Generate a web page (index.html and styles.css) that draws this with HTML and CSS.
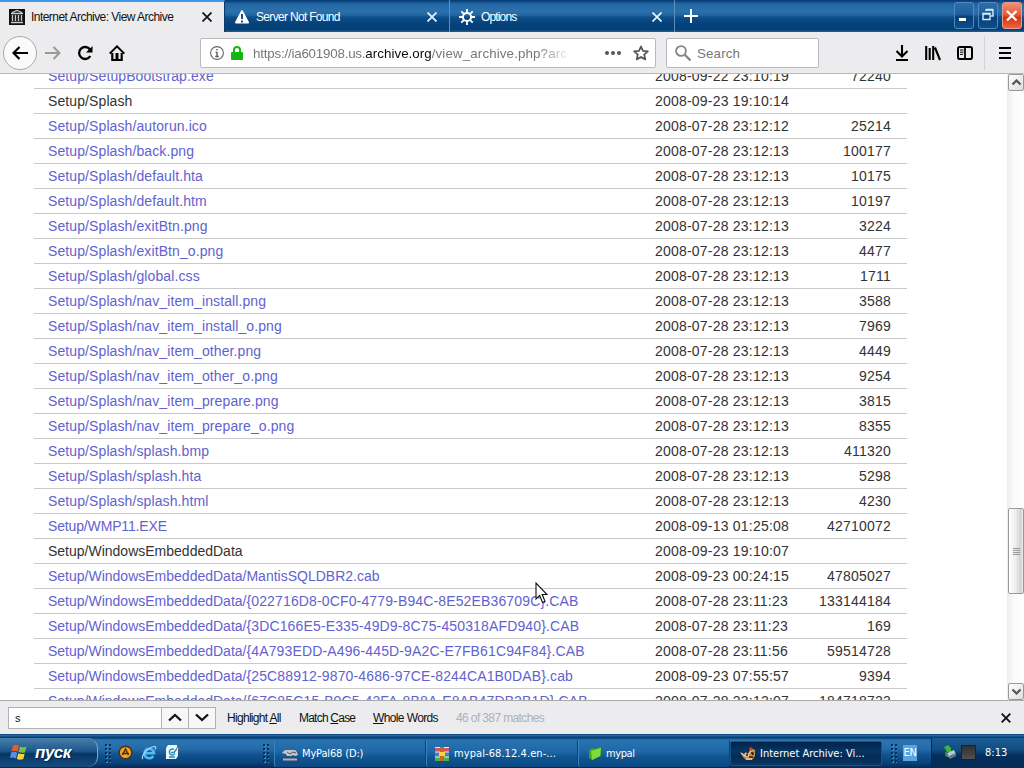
FILE: index.html
```html
<!DOCTYPE html>
<html lang="en">
<head>
    <meta charset="UTF-8">
    <title>Internet Archive: View Archive</title>
    <link rel="stylesheet" href="styles.css">
</head>
<body>
    <div class="screen">
        <div class="titlebar">
            <div class="tab active">
                <svg class="tab-icon" width="16" height="16" viewBox="0 0 16 16"><rect width="16" height="16" fill="#111"/><path d="M3 3.500L8 1.500L13 3.500M2 4.500h12M2 13.500h12M3.500 6v6M6.500 6v6M9.500 6v6M12.500 6v6" stroke="#ccc" stroke-width="1.300" fill="none"/></svg>
                <span class="tab-title">Internet Archive: View Archive</span>
                <svg class="tab-close" width="10" height="10" viewBox="0 0 10 10"><path d="M.5.5l9 9M9.500.5l-9 9"/></svg>
            </div>
            <div class="tab">
                <svg class="tab-icon" width="16" height="16" viewBox="0 0 16 16"><path d="M8 2.200L14 13.500H2Z" fill="#fff" stroke="#fff" stroke-width="2" stroke-linejoin="round"/><path d="M8 5v5M8 11.500v2" stroke="#12518a" stroke-width="2"/></svg>
                <span class="tab-title server">Server Not Found</span>
                <svg class="tab-close" width="10" height="10" viewBox="0 0 10 10"><path d="M.5.5l9 9M9.500.5l-9 9"/></svg>
            </div>
            <div class="tab">
                <svg class="tab-icon" width="16" height="16" viewBox="0 0 16 16"><circle cx="8" cy="8" r="4.100" fill="none" stroke="#fff" stroke-width="2"/><path d="M8 0v4M8 12v4M0 8h4M12 8h4M2.300 2.300l2.800 2.800M10.900 10.900l2.800 2.800M2.300 13.700l2.800-2.800M10.900 5.100l2.800-2.800" stroke="#fff" stroke-width="1.800"/></svg>
                <span class="tab-title options">Options</span>
                <svg class="tab-close" width="10" height="10" viewBox="0 0 10 10"><path d="M.5.5l9 9M9.500.5l-9 9"/></svg>
            </div>
            <svg class="new-tab" width="14" height="14" viewBox="0 0 14 14"><path d="M7 0v14M0 7h14" stroke="#fff" stroke-width="2"/></svg>
            <div class="window-buttons">
                <div class="win-btn"><svg width="18" height="22" viewBox="0 0 18 22"><path d="M4 14.500h7" stroke="#fff" stroke-width="3"/></svg></div>
                <div class="win-btn"><svg width="18" height="22" viewBox="0 0 18 22"><path d="M7 6V5h7v6h-2M7 4.500h7" stroke="#d5edff" stroke-width="1.400" fill="none"/><path d="M4 8.500h7v6H4zM4 9h7" stroke="#d5edff" stroke-width="1.400" fill="none"/></svg></div>
                <div class="win-btn close"><svg width="18" height="22" viewBox="0 0 18 22"><path d="M4 6l9.500 9.500M13.500 6L4 15.500" stroke="#fff" stroke-width="2.300"/></svg></div>
            </div>
        </div>

        <div class="toolbar">
            <div class="nav">
                <div class="back"><svg width="16" height="14" viewBox="0 0 16 14"><path d="M16 7H1.500M7.500 1L1.500 7l6 6" stroke="#000" stroke-width="2.200" fill="none"/></svg></div>
                <svg class="forward" width="16" height="14" viewBox="0 0 16 14"><path d="M0 7h14.500M8.500 1l6 6-6 6" stroke="#999" stroke-width="2" fill="none"/></svg>
                <svg class="reload" width="16" height="16" viewBox="0 0 16 16"><path d="M13 4.500A6 6 0 1 0 13.300 11" stroke="#000" stroke-width="2.300" fill="none"/><path d="M15.500 1v6.500H9Z" fill="#000"/></svg>
                <svg class="home" width="16" height="16" viewBox="0 0 16 16"><path d="M.7 8.600L8 1.400l7.300 7.200" stroke="#000" stroke-width="2" fill="none"/><path d="M3.300 8v7h9.400V8" stroke="#000" stroke-width="2.200" fill="none"/><path d="M6.500 8h3v7h-3z" fill="#000"/></svg>
            </div>
            <div class="urlbar">
                <svg class="info" width="14" height="14" viewBox="0 0 14 14"><circle cx="7" cy="7" r="6.400" fill="none" stroke="#666" stroke-width="1.100"/><path d="M7 3v1.600M5.600 6.300H7v4M5.300 10.500h3.400" stroke="#555" stroke-width="1.300" fill="none"/></svg>
                <svg class="lock" width="12" height="14" viewBox="0 0 12 14"><path d="M3 7V4a3 3 0 0 1 6 0v3" stroke="#12bc00" stroke-width="2" fill="none"/><rect y="6" width="12" height="8" rx="1" fill="#12b512"/></svg>
                <div class="url"><span class="host">https://ia601908.us.</span><span class="domain">archive.org</span>/view_archive.php?arc</div>
                <svg class="dots" width="16" height="4" viewBox="0 0 16 4"><circle cx="2" cy="2" r="2"/><circle cx="8" cy="2" r="2"/><circle cx="14" cy="2" r="2"/></svg>
                <svg class="star" width="16" height="16" viewBox="0 0 16 16"><path d="M8 1.500l2 4.400 4.800.5-3.600 3.200 1.100 4.800L8 12l-4.300 2.400 1.100-4.800L1.200 6.400 6 5.900Z" fill="none" stroke="#555" stroke-width="1.800" stroke-linejoin="round"/></svg>
            </div>
            <div class="search">
                <svg width="16" height="16" viewBox="0 0 16 16"><circle cx="6" cy="6" r="4.900" fill="none" stroke="#888" stroke-width="1.900"/><path d="M9.500 9.500l6 6" stroke="#888" stroke-width="2.300"/></svg>
                <span>Search</span>
            </div>
            <div class="tools">
                <svg width="14" height="16" viewBox="0 0 14 16"><path d="M7 0v11M1.500 6L7 11.500 12.500 6M1 15h12" stroke="#000" stroke-width="2.100" fill="none"/></svg>
                <svg width="16" height="16" viewBox="0 0 16 16"><path d="M1.200 1v14M4.700 3v12M8.200 1v14M10 2.500L15 15" stroke="#000" stroke-width="2.100"/></svg>
                <svg width="16" height="16" viewBox="0 0 16 16"><rect x="1" y="2" width="14" height="12" rx="1.800" fill="none" stroke="#000" stroke-width="2"/><path d="M8 2v12" stroke="#000" stroke-width="1.800"/><path d="M3 5h3.500M3 7.200h3.500M3 9.400h3" stroke="#000"/></svg>
            </div>
            <div class="menu"><svg width="12" height="12" viewBox="0 0 12 12"><path d="M0 1h12M0 6h12M0 11h12" stroke="#000" stroke-width="2"/></svg></div>
        </div>

        <div class="page">
            <div class="content">
                <table class="archext">
                    <tr><td><a>Setup/SetupBootstrap.exe</a></td><td>2008-09-22 23:10:19</td><td>72240</td></tr>
                    <tr><td>Setup/Splash</td><td>2008-09-23 19:10:14</td><td></td></tr>
                    <tr><td><a>Setup/Splash/autorun.ico</a></td><td>2008-07-28 23:12:12</td><td>25214</td></tr>
                    <tr><td><a>Setup/Splash/back.png</a></td><td>2008-07-28 23:12:13</td><td>100177</td></tr>
                    <tr><td><a>Setup/Splash/default.hta</a></td><td>2008-07-28 23:12:13</td><td>10175</td></tr>
                    <tr><td><a>Setup/Splash/default.htm</a></td><td>2008-07-28 23:12:13</td><td>10197</td></tr>
                    <tr><td><a>Setup/Splash/exitBtn.png</a></td><td>2008-07-28 23:12:13</td><td>3224</td></tr>
                    <tr><td><a>Setup/Splash/exitBtn_o.png</a></td><td>2008-07-28 23:12:13</td><td>4477</td></tr>
                    <tr><td><a>Setup/Splash/global.css</a></td><td>2008-07-28 23:12:13</td><td>1711</td></tr>
                    <tr><td><a>Setup/Splash/nav_item_install.png</a></td><td>2008-07-28 23:12:13</td><td>3588</td></tr>
                    <tr><td><a>Setup/Splash/nav_item_install_o.png</a></td><td>2008-07-28 23:12:13</td><td>7969</td></tr>
                    <tr><td><a>Setup/Splash/nav_item_other.png</a></td><td>2008-07-28 23:12:13</td><td>4449</td></tr>
                    <tr><td><a>Setup/Splash/nav_item_other_o.png</a></td><td>2008-07-28 23:12:13</td><td>9254</td></tr>
                    <tr><td><a>Setup/Splash/nav_item_prepare.png</a></td><td>2008-07-28 23:12:13</td><td>3815</td></tr>
                    <tr><td><a>Setup/Splash/nav_item_prepare_o.png</a></td><td>2008-07-28 23:12:13</td><td>8355</td></tr>
                    <tr><td><a>Setup/Splash/splash.bmp</a></td><td>2008-07-28 23:12:13</td><td>411320</td></tr>
                    <tr><td><a>Setup/Splash/splash.hta</a></td><td>2008-07-28 23:12:13</td><td>5298</td></tr>
                    <tr><td><a>Setup/Splash/splash.html</a></td><td>2008-07-28 23:12:13</td><td>4230</td></tr>
                    <tr class="upper"><td><a>Setup/WMP11.EXE</a></td><td>2008-09-13 01:25:08</td><td>42710072</td></tr>
                    <tr class="embedded"><td>Setup/WindowsEmbeddedData</td><td>2008-09-23 19:10:07</td><td></td></tr>
                    <tr class="embedded"><td><a>Setup/WindowsEmbeddedData/MantisSQLDBR2.cab</a></td><td>2008-09-23 00:24:15</td><td>47805027</td></tr>
                    <tr class="embedded"><td><a>Setup/WindowsEmbeddedData/<span class="guid">{022716D8-0CF0-4779-B94C-8E52EB36709C}.CAB</span></a></td><td>2008-07-28 23:11:23</td><td>133144184</td></tr>
                    <tr class="embedded"><td><a>Setup/WindowsEmbeddedData/<span class="guid">{3DC166E5-E335-49D9-8C75-450318AFD940}.CAB</span></a></td><td>2008-07-28 23:11:23</td><td>169</td></tr>
                    <tr class="embedded"><td><a>Setup/WindowsEmbeddedData/<span class="guid">{4A793EDD-A496-445D-9A2C-E7FB61C94F84}.CAB</span></a></td><td>2008-07-28 23:11:56</td><td>59514728</td></tr>
                    <tr class="embedded"><td><a>Setup/WindowsEmbeddedData/<span class="guid">{25C88912-9870-4686-97CE-8244CA1B0DAB}.cab</span></a></td><td>2008-09-23 07:55:57</td><td>9394</td></tr>
                    <tr class="embedded"><td><a>Setup/WindowsEmbeddedData/<span class="guid">{67C85C15-B0C5-42FA-8B8A-E8AB47DB2B1D}.CAB</span></a></td><td>2008-07-28 23:12:07</td><td>184718723</td></tr>
                </table>
            </div>
            <div class="scrollbar">
                <div class="scroll-btn"><svg width="11" height="7" viewBox="0 0 11 7"><path d="M1.500 5.500l4-4 4 4" stroke="#555" stroke-width="2.200" fill="none"/></svg></div>
                <div class="thumb"><i></i><i></i><i></i><i></i></div>
                <div class="scroll-btn down"><svg width="11" height="7" viewBox="0 0 11 7"><path d="M1.500 1.500l4 4 4-4" stroke="#555" stroke-width="2.200" fill="none"/></svg></div>
            </div>
        </div>

        <div class="findbar">
            <div class="find-input">s</div>
            <div class="find-btn"><svg width="14" height="9" viewBox="0 0 14 9"><path d="M1 7.500L7 2l6 5.500" stroke="#111" stroke-width="2.300" fill="none"/></svg></div>
            <div class="find-btn"><svg width="14" height="9" viewBox="0 0 14 9"><path d="M1 1.500L7 7l6-5.500" stroke="#111" stroke-width="2.300" fill="none"/></svg></div>
            <span class="find-label highlight">Highlight <u>A</u>ll</span>
            <span class="find-label match">Match <u>C</u>ase</span>
            <span class="find-label whole"><u>W</u>hole Words</span>
            <span class="find-label count">46 of 387 matches</span>
            <svg class="find-close" width="10" height="10" viewBox="0 0 10 10"><path d="M.7.7l8.600 8.600M9.300.7L.7 9.300" stroke="#111" stroke-width="1.900"/></svg>
        </div>

        <div class="taskbar">
            <div class="start">
                <svg width="18" height="17" viewBox="0 0 18 17"><path d="M3 1.500Q6 0 9 1.800L7.500 7.500Q5 6 1.500 7.300Z" fill="#ed5a2b"/><path d="M10 2.500Q13 4 16.500 2.500L15 8.300Q12 9.500 8.500 8Z" fill="#78c03a"/><path d="M1.200 8.500Q4.500 7 7.300 8.700L6 14.500Q3 13 0 14Z" fill="#5690e8"/><path d="M8.300 9.200Q11.500 10.700 14.700 9.500L13.300 15Q10 16.500 6.800 15Z" fill="#f8d434"/></svg>
                <span>пуск</span>
            </div>
            <div class="grip"></div>
            <div class="quick">
                <svg width="15" height="15" viewBox="0 0 15 15"><circle cx="7.500" cy="7.500" r="6.300" fill="#f5a51d" stroke="#4b3020" stroke-width="1.500"/><path d="M4.500 10L7.500 4l3 6M4 8.500h7" stroke="#4b3020" stroke-width="1.600" fill="none"/></svg>
                <svg width="16" height="16" viewBox="0 0 16 16"><path d="M4 8.200h9A4.800 4.800 0 1 0 12.300 11" stroke="#55b9f5" stroke-width="2.500" fill="none"/><path d="M2 14C-1 12 6 3 13 1.500q3-.3 1 3" stroke="#a5dcff" stroke-width="1.200" fill="none"/></svg>
                <svg width="15" height="15" viewBox="0 0 15 15"><path d="M3 0h9v2h1v9l-2 3H1V3Z" fill="#e8f8ff"/><path d="M9 4.500a3 3 0 1 0 1 4M6 7.500h3l3-4M4 12h6" stroke="#2587b8" stroke-width="1.300" fill="none"/><path d="M12 2l2 2" stroke="#e55" stroke-width="1.500"/></svg>
            </div>
            <div class="grip second"></div>
            <div class="tasks">
                <div class="task drive">
                    <svg width="16" height="16" viewBox="0 0 16 16"><path d="M0 7q2-3 4-3h9q2 1 3 5l-3 1-2-1-2 1H5L4 8Z" fill="#c4c6c9"/><path d="M5 6l3 2 3-2 3 1" stroke="#555" fill="none"/><path d="M1 13.500h14" stroke="#d6a3a7" stroke-width="2"/></svg>
                    <span>MyPal68 (D:)</span>
                </div>
                <div class="task zip">
                    <svg width="16" height="16" viewBox="0 0 16 16"><rect x="1" y="1" width="14" height="4.500" fill="#d94e60"/><rect x="1" y="5.500" width="14" height="5" fill="#467cca"/><rect x="1" y="10.500" width="14" height="4.500" fill="#4cad4c"/><path d="M1 1.500h14M1 6h14M1 11h14" stroke="#eed" /><path d="M6 1h4v14H6z" fill="#bd6c20"/><path d="M5 6h6v4H5z" fill="#ffcf3e"/></svg>
                    <span>mypal-68.12.4.en-...</span>
                </div>
                <div class="task folder">
                    <svg width="14" height="15" viewBox="0 0 14 15"><path d="M1 4l4-2 1 1 7-2v9L4 14 1 12Z" fill="#3fa51a"/><path d="M3 5l10-3-1 8-8 4Z" fill="#7fdb3c"/></svg>
                    <span>mypal</span>
                </div>
                <div class="task pressed">
                    <svg width="16" height="14" viewBox="0 0 16 14"><path d="M0 5l4 2 2-2 2 2 3-6 4 2v6l-3 4H6L3 10Z" fill="#c98d43"/><path d="M1 6l4 3h4M5 6l2 3 4-5M6 12h6" stroke="#f5e5bf" fill="none"/><path d="M9 2l2-1 1 2" stroke="#d33" stroke-width="1.500" fill="none"/><path d="M6 8h2M11 6h2v2M9 10h4" stroke="#27180e" stroke-width="1.300"/></svg>
                    <span>Internet Archive: Vi...</span>
                </div>
            </div>
            <div class="grip third"></div>
            <div class="lang">EN</div>
            <div class="tray">
                <svg width="14" height="15" viewBox="0 0 14 15"><path d="M1 2l4-2 3 3v4H4Z" fill="#39b836"/><path d="M4 8l7-3 2 4-7 4Z" fill="#bac8d2"/><path d="M6 11l7-3v3l-6 3Z" fill="#627888"/><path d="M3 7v4h3" stroke="#62ce4c" fill="none"/></svg>
                <div class="tray-box"></div>
                <span class="clock">8:13</span>
            </div>
        </div>

        <svg class="cursor" width="13" height="22" viewBox="0 0 13 22"><path d="M1 1v16l3.700-3.500L7.500 20.500l2.500-1.200L7.200 12.500H12Z" fill="#fff" stroke="#111" stroke-width="1.100"/></svg>
    </div>
</body>
</html>
```
FILE: styles.css
```css
body {
    margin: 0;
    font-family: "Liberation Sans", Arial, sans-serif;
    overflow: hidden;
}

svg {
    display: block;
    flex: none;
}

.screen {
    position: relative;
    width: 1024px;
    height: 768px;
    display: flex;
    flex-direction: column;
    overflow: hidden;
    background: #fff;
}

/* title bar and tabs */
.titlebar {
    height: 32px;
    flex: none;
    display: flex;
    background: linear-gradient(#0a3a73 0, #08427f 1px, #2368a4 4px, #2c70ab 11px, #2468a3 15px, #0e4f8b 17px, #05417b 24px, #044178 30px, #335f87 32px);
}

.tab {
    box-sizing: border-box;
    width: 225px;
    height: 32px;
    padding: 2px 12px 0 9px;
    display: flex;
    align-items: center;
    border-right: 1px solid #5a8fbf;
    color: #fff;
    font-size: 12px;
}

.tab.active {
    background: #ececef;
    border-top: 2px solid #3d96e8;
    border-right: 1px solid #0a3a6b;
    padding-top: 0;
    color: #111;
}

.tab-title {
    margin-left: 6px;
    flex: 1;
    white-space: nowrap;
    letter-spacing: -0.54px;
}

.tab-title.server {
    letter-spacing: -0.68px;
}

.tab-title.options {
    letter-spacing: -0.85px;
}

.tab-close path {
    stroke: #e6f4ff;
    stroke-width: 1.7;
}

.active .tab-close path {
    stroke: #111;
}

.new-tab {
    margin: 9px 0 0 9px;
}

.window-buttons {
    display: flex;
    gap: 4px;
    margin: 2px 2px 0 auto;
}

.win-btn {
    box-sizing: border-box;
    width: 20px;
    height: 27px;
    padding-top: 2px;
    border: 1px solid #5189ba;
    border-radius: 3px;
    background: linear-gradient(#2d70aa, #1d5f9c 45%, #064079 55%, #0c4e88);
}

.win-btn.close {
    border-color: #e39c8e;
    background: linear-gradient(#ee9078, #e25d3e 45%, #cb3514 60%, #ef6739);
}

/* navigation toolbar */
.toolbar {
    box-sizing: border-box;
    height: 42px;
    flex: none;
    display: flex;
    align-items: center;
    background: #ececef;
    border-bottom: 1px solid #b6b6b9;
}

.nav {
    width: 200px;
    display: flex;
    align-items: center;
}

.back {
    box-sizing: border-box;
    width: 34px;
    height: 34px;
    margin-left: 3px;
    display: flex;
    align-items: center;
    justify-content: center;
    border: 1px solid #aaa;
    border-radius: 50%;
    background: #fafafa;
}

.forward {
    margin-left: 8px;
}

.reload {
    margin-left: 16px;
}

.home {
    margin-left: 16px;
}

.urlbar,
.search {
    box-sizing: border-box;
    height: 30px;
    display: flex;
    align-items: center;
    background: #fff;
    border: 1px solid #b9b9bd;
    border-radius: 2px;
}

.urlbar {
    width: 456px;
    padding-left: 9px;
}

.lock {
    margin-left: 7px;
}

.url {
    width: 318px;
    margin-left: 10px;
    padding-top: 1px;
    color: #777;
    font-size: 13.33px;
    letter-spacing: 0.13px;
    white-space: nowrap;
    overflow: hidden;
    -webkit-mask-image: linear-gradient(to right, #000 285px, transparent 318px);
    mask-image: linear-gradient(to right, #000 285px, transparent 318px);
}

.host {
    letter-spacing: -0.2px;
}

.domain {
    color: #0c0c0d;
    letter-spacing: 0.04px;
}

.dots {
    margin-left: 34px;
    fill: #555;
}

.star {
    margin-left: 12px;
}

.search {
    width: 153px;
    margin-left: 10px;
    padding-left: 8px;
    color: #777;
    font-size: 13.33px;
    letter-spacing: 0.15px;
}

.search span {
    margin-left: 6px;
    padding-top: 1px;
}

.tools {
    display: flex;
    align-items: center;
    gap: 16px;
    margin-left: 76px;
}

.menu {
    height: 34px;
    display: flex;
    align-items: center;
    margin-left: 11px;
    padding-left: 14px;
    border-left: 1px solid #d3d3d6;
}

/* file listing */
.page {
    height: 626px;
    flex: none;
    display: flex;
    overflow: hidden;
}

.content {
    flex: 1;
    overflow: hidden;
}

.archext {
    width: 873px;
    margin: -10px 0 0 34px;
    table-layout: fixed;
    border-collapse: separate;
    border-spacing: 0;
    font-size: 14px;
    letter-spacing: 0.1px;
    color: #333;
}

.archext td {
    box-sizing: border-box;
    height: 25px;
    padding: 0 0 0 14px;
    border-bottom: 1px solid #c8c8c8;
    line-height: 24px;
    white-space: nowrap;
}

.archext td:nth-child(2) {
    width: 150px;
    padding-left: 0;
    letter-spacing: 0.21px;
}

.archext td:nth-child(3) {
    width: 102px;
    padding: 0 16px 0 0;
    text-align: right;
    letter-spacing: 0.21px;
}

.archext a {
    color: #6262cf;
}

.upper {
    letter-spacing: -0.15px;
}

.embedded {
    letter-spacing: 0;
}

.guid {
    letter-spacing: 0.14px;
}

.scrollbar {
    width: 17px;
    display: flex;
    flex-direction: column;
    align-items: flex-end;
    background: linear-gradient(to right, #eee, #fafafa 40%, #fff);
}

.scroll-btn,
.thumb {
    box-sizing: border-box;
    width: 16px;
    border: 1px solid #999;
    border-radius: 2px;
    display: flex;
    align-items: center;
    justify-content: center;
    background: linear-gradient(135deg, #fff, #ddd);
}

.scroll-btn {
    height: 17px;
}

.thumb {
    height: 86px;
    margin-top: 417px;
    flex-direction: column;
    gap: 1px;
    background: linear-gradient(to right, #fff, #eee 45%, #d2d2d2 85%, #eee);
}

.thumb i {
    width: 7px;
    height: 1px;
    background: #999;
}

.down {
    margin-top: auto;
}

/* find in page */
.findbar {
    box-sizing: border-box;
    height: 34px;
    flex: none;
    display: flex;
    align-items: center;
    padding-left: 8px;
    background: #ececef;
    border-top: 1px solid #aaa;
    font-size: 12px;
    color: #111;
}

.find-input,
.find-btn {
    box-sizing: border-box;
    height: 22px;
    border: 1px solid #b1b1b5;
    background: #fff;
}

.find-input {
    width: 154px;
    padding-left: 6px;
    line-height: 20px;
    font-size: 11px;
}

.find-btn {
    width: 28px;
    margin-left: -1px;
    display: flex;
    align-items: center;
    justify-content: center;
    background: #f7f7f8;
}

.find-label {
    white-space: nowrap;
    letter-spacing: -0.62px;
}

.highlight {
    width: 72px;
    margin-left: 11px;
    letter-spacing: -0.7px;
}

.match {
    width: 74px;
    letter-spacing: -0.78px;
}

.whole {
    width: 83px;
}

.count {
    color: #b0b0b3;
}

.find-close {
    margin: 0 13px 0 auto;
}

/* taskbar */
.taskbar {
    height: 34px;
    flex: none;
    display: flex;
    background: linear-gradient(#052f5f 0, #1d6aaa 1px, #1d6aaa 2px, #073a6d 3px, #0b4277 4px, #2b76b2 6px, #236ba8 15px, #10528e 21px, #08427b 29px, #042954 34px);
    color: #fff;
    font: 11px "DejaVu Sans Condensed", "Noto Sans", sans-serif;
}

.start {
    box-sizing: border-box;
    width: 98px;
    height: 29px;
    margin-top: 4px;
    padding-left: 10px;
    display: flex;
    align-items: center;
    border-right: 1px solid #77a9d0;
    border-radius: 0 10px 10px 0;
    background: linear-gradient(#477eaa, #1d578b 45%, #053766 55%, #164c7d);
}

.start span {
    margin-left: 7px;
    font: italic bold 17px "Liberation Sans", Arial, sans-serif;
    letter-spacing: -0.5px;
    text-shadow: 1px 1px 1px #022247;
}

.grip {
    width: 7px;
    height: 20px;
    margin: 9px 0 0 6px;
    background-image: radial-gradient(circle, #052e5d 0, #052e5d 1px, transparent 1.3px), radial-gradient(circle, #488bbd 0, #488bbd 1px, transparent 1.3px);
    background-size: 4px 4px;
    background-position: 0 0, 1px 1px;
}

.quick {
    display: flex;
    align-items: center;
    gap: 8px;
    padding-top: 3px;
    margin-left: 7px;
}

.second {
    margin-left: 82px;
}

.tasks {
    display: flex;
    margin: 6px 0 0 5px;
}

.task {
    box-sizing: border-box;
    width: 152px;
    height: 27px;
    padding-left: 9px;
    display: flex;
    align-items: center;
    border-left: 1px solid #3b82bc;
    border-right: 1px solid #0c427b;
    border-radius: 2px;
    background: linear-gradient(#2873af, #2069a8 40%, #0f5590 65%, #0b4984);
}

.task span {
    margin-left: 4px;
    white-space: nowrap;
}

.task.drive {
    padding-left: 7px;
    letter-spacing: -0.15px;
}

.task.zip {
    padding-left: 7px;
    letter-spacing: 0.08px;
}

.task.folder {
    letter-spacing: -0.4px;
}

.task.pressed {
    margin-top: 1px;
    height: 25px;
    border: 1px solid #1b5386;
    background: linear-gradient(#032247, #063565 40%, #042a55 65%, #083763);
}

.third {
    margin-left: 8px;
}

.lang {
    width: 14px;
    height: 16px;
    margin: 11px 0 0 6px;
    line-height: 16px;
    text-align: center;
    letter-spacing: -0.4px;
    background: #5ea4dc;
}

.tray {
    flex: 1;
    height: 29px;
    margin-top: 4px;
    margin-left: 14px;
    padding-left: 11px;
    display: flex;
    align-items: center;
    border-left: 1px solid #04284e;
    background: linear-gradient(#1b5c94, #134d82 40%, #032e5d 60%, #052c54);
}

.tray-box {
    width: 15px;
    height: 15px;
    margin-left: 4px;
    background: linear-gradient(#303030, #505050);
    border: 1px solid #202020;
    box-sizing: border-box;
}

.clock {
    margin-left: 9px;
}

.cursor {
    position: absolute;
    left: 535px;
    top: 582px;
}
```
